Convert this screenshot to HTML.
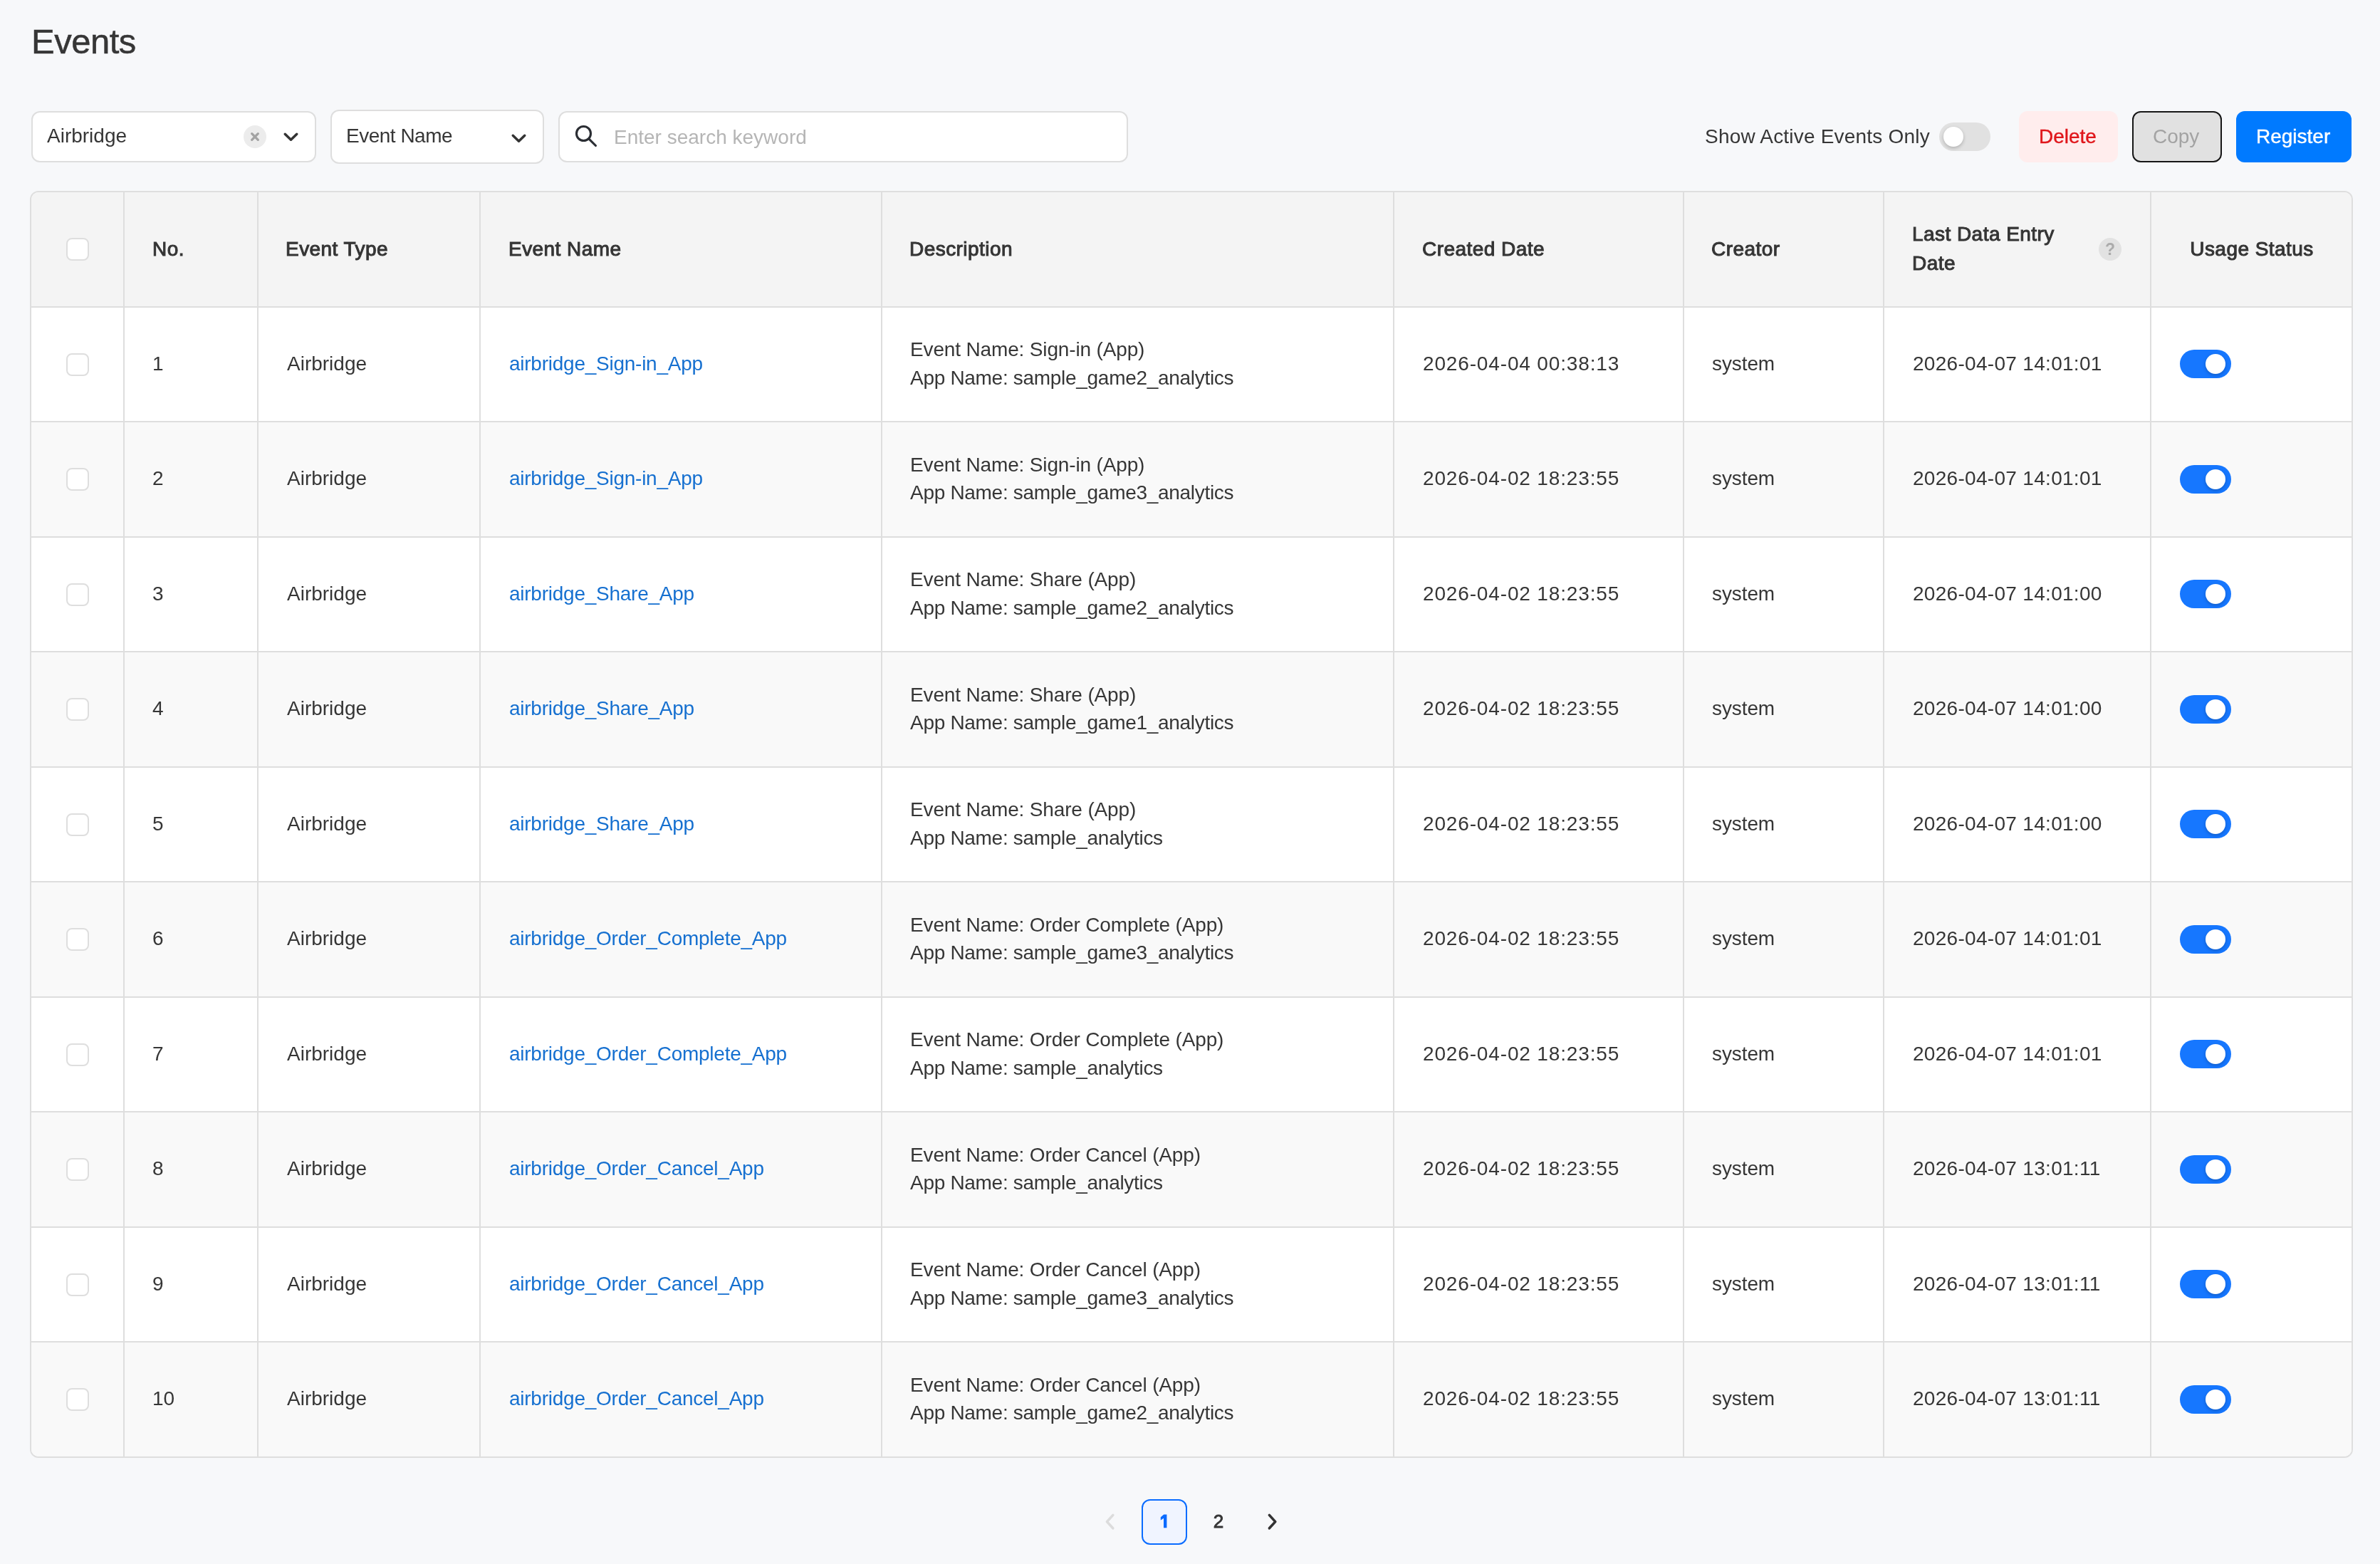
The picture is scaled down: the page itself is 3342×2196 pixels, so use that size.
<!DOCTYPE html>
<html><head><meta charset="utf-8"><title>Events</title>
<style>
html,body{margin:0;padding:0;}
body{width:3342px;height:2196px;background:#f7f8fa;position:relative;overflow:hidden;font-family:"Liberation Sans", sans-serif;color:#363636;}
.t{position:absolute;white-space:nowrap;}
.box{position:absolute;box-sizing:border-box;background:#fff;border:2px solid #dedede;border-radius:12px;}
.btn{position:absolute;box-sizing:border-box;border-radius:12px;}
.cb{position:absolute;box-sizing:border-box;width:32px;height:32px;border:2px solid #dedede;border-radius:8px;background:#fff;}
.hl{position:absolute;background:#dedede;}
.tg{position:absolute;width:72px;height:40px;border-radius:20px;}
.knob{position:absolute;width:28px;height:28px;border-radius:50%;background:#fff;top:6px;box-shadow:0 2px 5px rgba(0,0,0,0.22);}
</style></head><body>
<div id="wrap" style="position:absolute;left:0;top:0;width:3342px;height:2196px;will-change:transform;">

<div class="t" style="left:44px;top:30.00px;font-size:49px;line-height:56px;font-weight:400;color:#363636;-webkit-text-stroke:0.5px #333;letter-spacing:-0.5px;">Events</div>
<div class="box" style="left:44px;top:156px;width:400px;height:72px;"></div>
<div class="t" style="left:66px;top:171.20px;font-size:28px;line-height:40px;font-weight:400;color:#363636;">Airbridge</div>
<div style="position:absolute;left:342px;top:176px;width:32px;height:32px;border-radius:50%;background:#ececec;"></div>
<svg style="position:absolute;left:342px;top:176px" width="32" height="32"><path d="M11.7 11.7 L20.3 20.3 M20.3 11.7 L11.7 20.3" stroke="#a3a3a3" stroke-width="3.3" stroke-linecap="round"/></svg>
<svg style="position:absolute;left:394.5px;top:182.5px" width="27.0" height="18.5"><polyline points="5.25,5.25 13.5,13.25 21.75,5.25" fill="none" stroke="#333" stroke-width="3.5" stroke-linecap="round" stroke-linejoin="round"/></svg>
<div class="box" style="left:464px;top:154px;width:300px;height:76px;"></div>
<div class="t" style="left:486px;top:171.30px;font-size:28px;line-height:40px;font-weight:400;color:#363636;letter-spacing:-0.5px;">Event Name</div>
<svg style="position:absolute;left:714.5px;top:184.5px" width="27.0" height="18.5"><polyline points="5.25,5.25 13.5,13.25 21.75,5.25" fill="none" stroke="#333" stroke-width="3.5" stroke-linecap="round" stroke-linejoin="round"/></svg>
<div class="box" style="left:784px;top:156px;width:800px;height:72px;"></div>
<svg style="position:absolute;left:800px;top:168px" width="48" height="48"><circle cx="19.5" cy="19.5" r="10" fill="none" stroke="#2a2d33" stroke-width="3.1"/><path d="M26.8 26.8 L36.5 36.5" stroke="#2a2d33" stroke-width="3.1" stroke-linecap="round"/></svg>
<div class="t" style="left:862px;top:172.90px;font-size:28px;line-height:40px;font-weight:400;color:#b5b5b5;">Enter search keyword</div>
<div class="t" style="left:2394px;top:171.70px;font-size:28px;line-height:40px;font-weight:400;color:#363636;letter-spacing:0.2px;">Show Active Events Only</div>
<div class="tg" style="left:2723px;top:172px;background:#e1e1e1;"><div class="knob" style="left:6px;"></div></div>
<div class="btn" style="left:2835px;top:156px;width:139px;height:72px;background:#ffeded;"></div>
<div class="t" style="left:2863px;top:171.50px;font-size:28px;line-height:40px;font-weight:400;color:#e0161b;-webkit-text-stroke:0.4px #e0161b;">Delete</div>
<div class="btn" style="left:2994px;top:156px;width:126px;height:72px;background:#e1e1e1;border:2px solid #161616;"></div>
<div class="t" style="left:3023px;top:171.50px;font-size:28px;line-height:40px;font-weight:400;color:#a3a3a3;">Copy</div>
<div class="btn" style="left:3140px;top:156px;width:162px;height:72px;background:#007aff;"></div>
<div class="t" style="left:3168px;top:171.50px;font-size:28px;line-height:40px;font-weight:400;color:#ffffff;-webkit-text-stroke:0.4px #fff;">Register</div>
<div style="position:absolute;left:42px;top:268px;width:3262px;height:1779px;box-sizing:border-box;border:2px solid #dedede;border-radius:12px;overflow:hidden;background:#fff;">
<div style="position:absolute;left:0;top:0;width:100%;height:160px;background:#f4f4f4;"></div>
<div style="position:absolute;left:0;top:162px;width:100%;height:159px;background:#ffffff;"></div>
<div style="position:absolute;left:0;top:323px;width:100%;height:160px;background:#f9f9f9;"></div>
<div style="position:absolute;left:0;top:485px;width:100%;height:159px;background:#ffffff;"></div>
<div style="position:absolute;left:0;top:646px;width:100%;height:160px;background:#f9f9f9;"></div>
<div style="position:absolute;left:0;top:808px;width:100%;height:159px;background:#ffffff;"></div>
<div style="position:absolute;left:0;top:969px;width:100%;height:160px;background:#f9f9f9;"></div>
<div style="position:absolute;left:0;top:1131px;width:100%;height:159px;background:#ffffff;"></div>
<div style="position:absolute;left:0;top:1292px;width:100%;height:160px;background:#f9f9f9;"></div>
<div style="position:absolute;left:0;top:1454px;width:100%;height:159px;background:#ffffff;"></div>
<div style="position:absolute;left:0;top:1615px;width:100%;height:160px;background:#f9f9f9;"></div>
<div class="hl" style="left:0;top:160px;width:100%;height:2px;"></div>
<div class="hl" style="left:0;top:321px;width:100%;height:2px;"></div>
<div class="hl" style="left:0;top:483px;width:100%;height:2px;"></div>
<div class="hl" style="left:0;top:644px;width:100%;height:2px;"></div>
<div class="hl" style="left:0;top:806px;width:100%;height:2px;"></div>
<div class="hl" style="left:0;top:967px;width:100%;height:2px;"></div>
<div class="hl" style="left:0;top:1129px;width:100%;height:2px;"></div>
<div class="hl" style="left:0;top:1290px;width:100%;height:2px;"></div>
<div class="hl" style="left:0;top:1452px;width:100%;height:2px;"></div>
<div class="hl" style="left:0;top:1613px;width:100%;height:2px;"></div>
<div class="hl" style="left:129px;top:0;width:2px;height:100%;"></div>
<div class="hl" style="left:317px;top:0;width:2px;height:100%;"></div>
<div class="hl" style="left:629px;top:0;width:2px;height:100%;"></div>
<div class="hl" style="left:1193px;top:0;width:2px;height:100%;"></div>
<div class="hl" style="left:1912px;top:0;width:2px;height:100%;"></div>
<div class="hl" style="left:2319px;top:0;width:2px;height:100%;"></div>
<div class="hl" style="left:2600px;top:0;width:2px;height:100%;"></div>
<div class="hl" style="left:2975px;top:0;width:2px;height:100%;"></div>
</div>
<div class="cb" style="left:93px;top:334px;"></div>
<div class="t" style="left:214px;top:329.70px;font-size:28px;line-height:40px;font-weight:400;color:#363636;-webkit-text-stroke:1px #333;letter-spacing:0.45px;">No.</div>
<div class="t" style="left:401px;top:329.70px;font-size:28px;line-height:40px;font-weight:400;color:#363636;-webkit-text-stroke:1px #333;letter-spacing:0.45px;">Event Type</div>
<div class="t" style="left:714px;top:329.70px;font-size:28px;line-height:40px;font-weight:400;color:#363636;-webkit-text-stroke:1px #333;letter-spacing:0.45px;">Event Name</div>
<div class="t" style="left:1277px;top:329.70px;font-size:28px;line-height:40px;font-weight:400;color:#363636;-webkit-text-stroke:1px #333;letter-spacing:0.45px;">Description</div>
<div class="t" style="left:1997px;top:329.70px;font-size:28px;line-height:40px;font-weight:400;color:#363636;-webkit-text-stroke:1px #333;letter-spacing:0.45px;">Created Date</div>
<div class="t" style="left:2403px;top:329.70px;font-size:28px;line-height:40px;font-weight:400;color:#363636;-webkit-text-stroke:1px #333;letter-spacing:0.45px;">Creator</div>
<div class="t" style="left:2685px;top:309.30px;font-size:28px;line-height:40px;font-weight:400;color:#363636;-webkit-text-stroke:1px #333;letter-spacing:0.45px;">Last Data Entry</div>
<div class="t" style="left:2685px;top:349.70px;font-size:28px;line-height:40px;font-weight:400;color:#363636;-webkit-text-stroke:1px #333;letter-spacing:0.45px;">Date</div>
<div style="position:absolute;left:2947px;top:334px;width:32px;height:32px;border-radius:50%;background:#e2e2e2;"></div>
<div class="t" style="left:2947px;top:330.30px;font-size:23px;line-height:40px;font-weight:700;color:#ababab;width:32px;text-align:center;">?</div>
<div class="t" style="left:3021px;top:329.70px;font-size:28px;line-height:40px;font-weight:400;color:#363636;width:282px;text-align:center;-webkit-text-stroke:1px #333;letter-spacing:0.45px;">Usage Status</div>
<div class="cb" style="left:93px;top:495.5px;"></div>
<div class="t" style="left:214px;top:490.80px;font-size:28px;line-height:40px;font-weight:400;color:#363636;">1</div>
<div class="t" style="left:403px;top:490.80px;font-size:28px;line-height:40px;font-weight:400;color:#363636;">Airbridge</div>
<div class="t" style="left:715px;top:490.80px;font-size:28px;line-height:40px;font-weight:400;color:#1670d0;letter-spacing:-0.25px;">airbridge_Sign-in_App</div>
<div class="t" style="left:1278px;top:471.00px;font-size:28px;line-height:40px;font-weight:400;color:#363636;letter-spacing:-0.15px;">Event Name: Sign-in (App)</div>
<div class="t" style="left:1278px;top:510.70px;font-size:28px;line-height:40px;font-weight:400;color:#363636;letter-spacing:-0.3px;">App Name: sample_game2_analytics</div>
<div class="t" style="left:1998px;top:490.80px;font-size:28px;line-height:40px;font-weight:400;color:#363636;letter-spacing:0.85px;">2026-04-04 00:38:13</div>
<div class="t" style="left:2404px;top:490.80px;font-size:28px;line-height:40px;font-weight:400;color:#363636;letter-spacing:-0.1px;">system</div>
<div class="t" style="left:2686px;top:490.80px;font-size:28px;line-height:40px;font-weight:400;color:#363636;letter-spacing:0.3px;">2026-04-07 14:01:01</div>
<div class="tg" style="left:3061px;top:491px;background:#1677ff;"><div class="knob" style="left:36px;"></div></div>
<div class="cb" style="left:93px;top:657.0px;"></div>
<div class="t" style="left:214px;top:652.30px;font-size:28px;line-height:40px;font-weight:400;color:#363636;">2</div>
<div class="t" style="left:403px;top:652.30px;font-size:28px;line-height:40px;font-weight:400;color:#363636;">Airbridge</div>
<div class="t" style="left:715px;top:652.30px;font-size:28px;line-height:40px;font-weight:400;color:#1670d0;letter-spacing:-0.25px;">airbridge_Sign-in_App</div>
<div class="t" style="left:1278px;top:632.50px;font-size:28px;line-height:40px;font-weight:400;color:#363636;letter-spacing:-0.15px;">Event Name: Sign-in (App)</div>
<div class="t" style="left:1278px;top:672.20px;font-size:28px;line-height:40px;font-weight:400;color:#363636;letter-spacing:-0.3px;">App Name: sample_game3_analytics</div>
<div class="t" style="left:1998px;top:652.30px;font-size:28px;line-height:40px;font-weight:400;color:#363636;letter-spacing:0.85px;">2026-04-02 18:23:55</div>
<div class="t" style="left:2404px;top:652.30px;font-size:28px;line-height:40px;font-weight:400;color:#363636;letter-spacing:-0.1px;">system</div>
<div class="t" style="left:2686px;top:652.30px;font-size:28px;line-height:40px;font-weight:400;color:#363636;letter-spacing:0.3px;">2026-04-07 14:01:01</div>
<div class="tg" style="left:3061px;top:653px;background:#1677ff;"><div class="knob" style="left:36px;"></div></div>
<div class="cb" style="left:93px;top:818.5px;"></div>
<div class="t" style="left:214px;top:813.80px;font-size:28px;line-height:40px;font-weight:400;color:#363636;">3</div>
<div class="t" style="left:403px;top:813.80px;font-size:28px;line-height:40px;font-weight:400;color:#363636;">Airbridge</div>
<div class="t" style="left:715px;top:813.80px;font-size:28px;line-height:40px;font-weight:400;color:#1670d0;letter-spacing:-0.25px;">airbridge_Share_App</div>
<div class="t" style="left:1278px;top:794.00px;font-size:28px;line-height:40px;font-weight:400;color:#363636;letter-spacing:-0.15px;">Event Name: Share (App)</div>
<div class="t" style="left:1278px;top:833.70px;font-size:28px;line-height:40px;font-weight:400;color:#363636;letter-spacing:-0.3px;">App Name: sample_game2_analytics</div>
<div class="t" style="left:1998px;top:813.80px;font-size:28px;line-height:40px;font-weight:400;color:#363636;letter-spacing:0.85px;">2026-04-02 18:23:55</div>
<div class="t" style="left:2404px;top:813.80px;font-size:28px;line-height:40px;font-weight:400;color:#363636;letter-spacing:-0.1px;">system</div>
<div class="t" style="left:2686px;top:813.80px;font-size:28px;line-height:40px;font-weight:400;color:#363636;letter-spacing:0.3px;">2026-04-07 14:01:00</div>
<div class="tg" style="left:3061px;top:814px;background:#1677ff;"><div class="knob" style="left:36px;"></div></div>
<div class="cb" style="left:93px;top:980.0px;"></div>
<div class="t" style="left:214px;top:975.30px;font-size:28px;line-height:40px;font-weight:400;color:#363636;">4</div>
<div class="t" style="left:403px;top:975.30px;font-size:28px;line-height:40px;font-weight:400;color:#363636;">Airbridge</div>
<div class="t" style="left:715px;top:975.30px;font-size:28px;line-height:40px;font-weight:400;color:#1670d0;letter-spacing:-0.25px;">airbridge_Share_App</div>
<div class="t" style="left:1278px;top:955.50px;font-size:28px;line-height:40px;font-weight:400;color:#363636;letter-spacing:-0.15px;">Event Name: Share (App)</div>
<div class="t" style="left:1278px;top:995.20px;font-size:28px;line-height:40px;font-weight:400;color:#363636;letter-spacing:-0.3px;">App Name: sample_game1_analytics</div>
<div class="t" style="left:1998px;top:975.30px;font-size:28px;line-height:40px;font-weight:400;color:#363636;letter-spacing:0.85px;">2026-04-02 18:23:55</div>
<div class="t" style="left:2404px;top:975.30px;font-size:28px;line-height:40px;font-weight:400;color:#363636;letter-spacing:-0.1px;">system</div>
<div class="t" style="left:2686px;top:975.30px;font-size:28px;line-height:40px;font-weight:400;color:#363636;letter-spacing:0.3px;">2026-04-07 14:01:00</div>
<div class="tg" style="left:3061px;top:976px;background:#1677ff;"><div class="knob" style="left:36px;"></div></div>
<div class="cb" style="left:93px;top:1141.5px;"></div>
<div class="t" style="left:214px;top:1136.80px;font-size:28px;line-height:40px;font-weight:400;color:#363636;">5</div>
<div class="t" style="left:403px;top:1136.80px;font-size:28px;line-height:40px;font-weight:400;color:#363636;">Airbridge</div>
<div class="t" style="left:715px;top:1136.80px;font-size:28px;line-height:40px;font-weight:400;color:#1670d0;letter-spacing:-0.25px;">airbridge_Share_App</div>
<div class="t" style="left:1278px;top:1117.00px;font-size:28px;line-height:40px;font-weight:400;color:#363636;letter-spacing:-0.15px;">Event Name: Share (App)</div>
<div class="t" style="left:1278px;top:1156.70px;font-size:28px;line-height:40px;font-weight:400;color:#363636;letter-spacing:-0.3px;">App Name: sample_analytics</div>
<div class="t" style="left:1998px;top:1136.80px;font-size:28px;line-height:40px;font-weight:400;color:#363636;letter-spacing:0.85px;">2026-04-02 18:23:55</div>
<div class="t" style="left:2404px;top:1136.80px;font-size:28px;line-height:40px;font-weight:400;color:#363636;letter-spacing:-0.1px;">system</div>
<div class="t" style="left:2686px;top:1136.80px;font-size:28px;line-height:40px;font-weight:400;color:#363636;letter-spacing:0.3px;">2026-04-07 14:01:00</div>
<div class="tg" style="left:3061px;top:1137px;background:#1677ff;"><div class="knob" style="left:36px;"></div></div>
<div class="cb" style="left:93px;top:1303.0px;"></div>
<div class="t" style="left:214px;top:1298.30px;font-size:28px;line-height:40px;font-weight:400;color:#363636;">6</div>
<div class="t" style="left:403px;top:1298.30px;font-size:28px;line-height:40px;font-weight:400;color:#363636;">Airbridge</div>
<div class="t" style="left:715px;top:1298.30px;font-size:28px;line-height:40px;font-weight:400;color:#1670d0;letter-spacing:-0.25px;">airbridge_Order_Complete_App</div>
<div class="t" style="left:1278px;top:1278.50px;font-size:28px;line-height:40px;font-weight:400;color:#363636;letter-spacing:-0.15px;">Event Name: Order Complete (App)</div>
<div class="t" style="left:1278px;top:1318.20px;font-size:28px;line-height:40px;font-weight:400;color:#363636;letter-spacing:-0.3px;">App Name: sample_game3_analytics</div>
<div class="t" style="left:1998px;top:1298.30px;font-size:28px;line-height:40px;font-weight:400;color:#363636;letter-spacing:0.85px;">2026-04-02 18:23:55</div>
<div class="t" style="left:2404px;top:1298.30px;font-size:28px;line-height:40px;font-weight:400;color:#363636;letter-spacing:-0.1px;">system</div>
<div class="t" style="left:2686px;top:1298.30px;font-size:28px;line-height:40px;font-weight:400;color:#363636;letter-spacing:0.3px;">2026-04-07 14:01:01</div>
<div class="tg" style="left:3061px;top:1299px;background:#1677ff;"><div class="knob" style="left:36px;"></div></div>
<div class="cb" style="left:93px;top:1464.5px;"></div>
<div class="t" style="left:214px;top:1459.80px;font-size:28px;line-height:40px;font-weight:400;color:#363636;">7</div>
<div class="t" style="left:403px;top:1459.80px;font-size:28px;line-height:40px;font-weight:400;color:#363636;">Airbridge</div>
<div class="t" style="left:715px;top:1459.80px;font-size:28px;line-height:40px;font-weight:400;color:#1670d0;letter-spacing:-0.25px;">airbridge_Order_Complete_App</div>
<div class="t" style="left:1278px;top:1440.00px;font-size:28px;line-height:40px;font-weight:400;color:#363636;letter-spacing:-0.15px;">Event Name: Order Complete (App)</div>
<div class="t" style="left:1278px;top:1479.70px;font-size:28px;line-height:40px;font-weight:400;color:#363636;letter-spacing:-0.3px;">App Name: sample_analytics</div>
<div class="t" style="left:1998px;top:1459.80px;font-size:28px;line-height:40px;font-weight:400;color:#363636;letter-spacing:0.85px;">2026-04-02 18:23:55</div>
<div class="t" style="left:2404px;top:1459.80px;font-size:28px;line-height:40px;font-weight:400;color:#363636;letter-spacing:-0.1px;">system</div>
<div class="t" style="left:2686px;top:1459.80px;font-size:28px;line-height:40px;font-weight:400;color:#363636;letter-spacing:0.3px;">2026-04-07 14:01:01</div>
<div class="tg" style="left:3061px;top:1460px;background:#1677ff;"><div class="knob" style="left:36px;"></div></div>
<div class="cb" style="left:93px;top:1626.0px;"></div>
<div class="t" style="left:214px;top:1621.30px;font-size:28px;line-height:40px;font-weight:400;color:#363636;">8</div>
<div class="t" style="left:403px;top:1621.30px;font-size:28px;line-height:40px;font-weight:400;color:#363636;">Airbridge</div>
<div class="t" style="left:715px;top:1621.30px;font-size:28px;line-height:40px;font-weight:400;color:#1670d0;letter-spacing:-0.25px;">airbridge_Order_Cancel_App</div>
<div class="t" style="left:1278px;top:1601.50px;font-size:28px;line-height:40px;font-weight:400;color:#363636;letter-spacing:-0.15px;">Event Name: Order Cancel (App)</div>
<div class="t" style="left:1278px;top:1641.20px;font-size:28px;line-height:40px;font-weight:400;color:#363636;letter-spacing:-0.3px;">App Name: sample_analytics</div>
<div class="t" style="left:1998px;top:1621.30px;font-size:28px;line-height:40px;font-weight:400;color:#363636;letter-spacing:0.85px;">2026-04-02 18:23:55</div>
<div class="t" style="left:2404px;top:1621.30px;font-size:28px;line-height:40px;font-weight:400;color:#363636;letter-spacing:-0.1px;">system</div>
<div class="t" style="left:2686px;top:1621.30px;font-size:28px;line-height:40px;font-weight:400;color:#363636;letter-spacing:0.3px;">2026-04-07 13:01:11</div>
<div class="tg" style="left:3061px;top:1622px;background:#1677ff;"><div class="knob" style="left:36px;"></div></div>
<div class="cb" style="left:93px;top:1787.5px;"></div>
<div class="t" style="left:214px;top:1782.80px;font-size:28px;line-height:40px;font-weight:400;color:#363636;">9</div>
<div class="t" style="left:403px;top:1782.80px;font-size:28px;line-height:40px;font-weight:400;color:#363636;">Airbridge</div>
<div class="t" style="left:715px;top:1782.80px;font-size:28px;line-height:40px;font-weight:400;color:#1670d0;letter-spacing:-0.25px;">airbridge_Order_Cancel_App</div>
<div class="t" style="left:1278px;top:1763.00px;font-size:28px;line-height:40px;font-weight:400;color:#363636;letter-spacing:-0.15px;">Event Name: Order Cancel (App)</div>
<div class="t" style="left:1278px;top:1802.70px;font-size:28px;line-height:40px;font-weight:400;color:#363636;letter-spacing:-0.3px;">App Name: sample_game3_analytics</div>
<div class="t" style="left:1998px;top:1782.80px;font-size:28px;line-height:40px;font-weight:400;color:#363636;letter-spacing:0.85px;">2026-04-02 18:23:55</div>
<div class="t" style="left:2404px;top:1782.80px;font-size:28px;line-height:40px;font-weight:400;color:#363636;letter-spacing:-0.1px;">system</div>
<div class="t" style="left:2686px;top:1782.80px;font-size:28px;line-height:40px;font-weight:400;color:#363636;letter-spacing:0.3px;">2026-04-07 13:01:11</div>
<div class="tg" style="left:3061px;top:1783px;background:#1677ff;"><div class="knob" style="left:36px;"></div></div>
<div class="cb" style="left:93px;top:1949.0px;"></div>
<div class="t" style="left:214px;top:1944.30px;font-size:28px;line-height:40px;font-weight:400;color:#363636;">10</div>
<div class="t" style="left:403px;top:1944.30px;font-size:28px;line-height:40px;font-weight:400;color:#363636;">Airbridge</div>
<div class="t" style="left:715px;top:1944.30px;font-size:28px;line-height:40px;font-weight:400;color:#1670d0;letter-spacing:-0.25px;">airbridge_Order_Cancel_App</div>
<div class="t" style="left:1278px;top:1924.50px;font-size:28px;line-height:40px;font-weight:400;color:#363636;letter-spacing:-0.15px;">Event Name: Order Cancel (App)</div>
<div class="t" style="left:1278px;top:1964.20px;font-size:28px;line-height:40px;font-weight:400;color:#363636;letter-spacing:-0.3px;">App Name: sample_game2_analytics</div>
<div class="t" style="left:1998px;top:1944.30px;font-size:28px;line-height:40px;font-weight:400;color:#363636;letter-spacing:0.85px;">2026-04-02 18:23:55</div>
<div class="t" style="left:2404px;top:1944.30px;font-size:28px;line-height:40px;font-weight:400;color:#363636;letter-spacing:-0.1px;">system</div>
<div class="t" style="left:2686px;top:1944.30px;font-size:28px;line-height:40px;font-weight:400;color:#363636;letter-spacing:0.3px;">2026-04-07 13:01:11</div>
<div class="tg" style="left:3061px;top:1945px;background:#1677ff;"><div class="knob" style="left:36px;"></div></div>
<svg style="position:absolute;left:1549.4px;top:2122.4px" width="19.2" height="29.2"><polyline points="13.799999999999999,5.4 5.4,14.6 13.799999999999999,23.8" fill="none" stroke="#dcdcdc" stroke-width="3.6" stroke-linecap="round" stroke-linejoin="round"/></svg>
<div style="position:absolute;box-sizing:border-box;left:1603px;top:2105px;width:64px;height:64px;border:2px solid #0a6cff;border-radius:12px;background:#f0f4ff;"></div>
<svg style="position:absolute;left:1603px;top:2105px" width="64" height="64"><path d="M31.2 21.6 L35.4 21.6 L35.4 40.2 L31.0 40.2 L31.0 26.8 L26.8 29.6 L26.8 25.2 Z" fill="#0a6aff"/></svg>
<div class="t" style="left:1679px;top:2116.20px;font-size:26px;line-height:40px;font-weight:400;color:#363636;width:64px;text-align:center;-webkit-text-stroke:0.9px #333;">2</div>
<svg style="position:absolute;left:1777.4px;top:2122.4px" width="19.2" height="29.2"><polyline points="5.4,5.4 13.799999999999999,14.6 5.4,23.8" fill="none" stroke="#333333" stroke-width="3.6" stroke-linecap="round" stroke-linejoin="round"/></svg>
</div></body></html>
